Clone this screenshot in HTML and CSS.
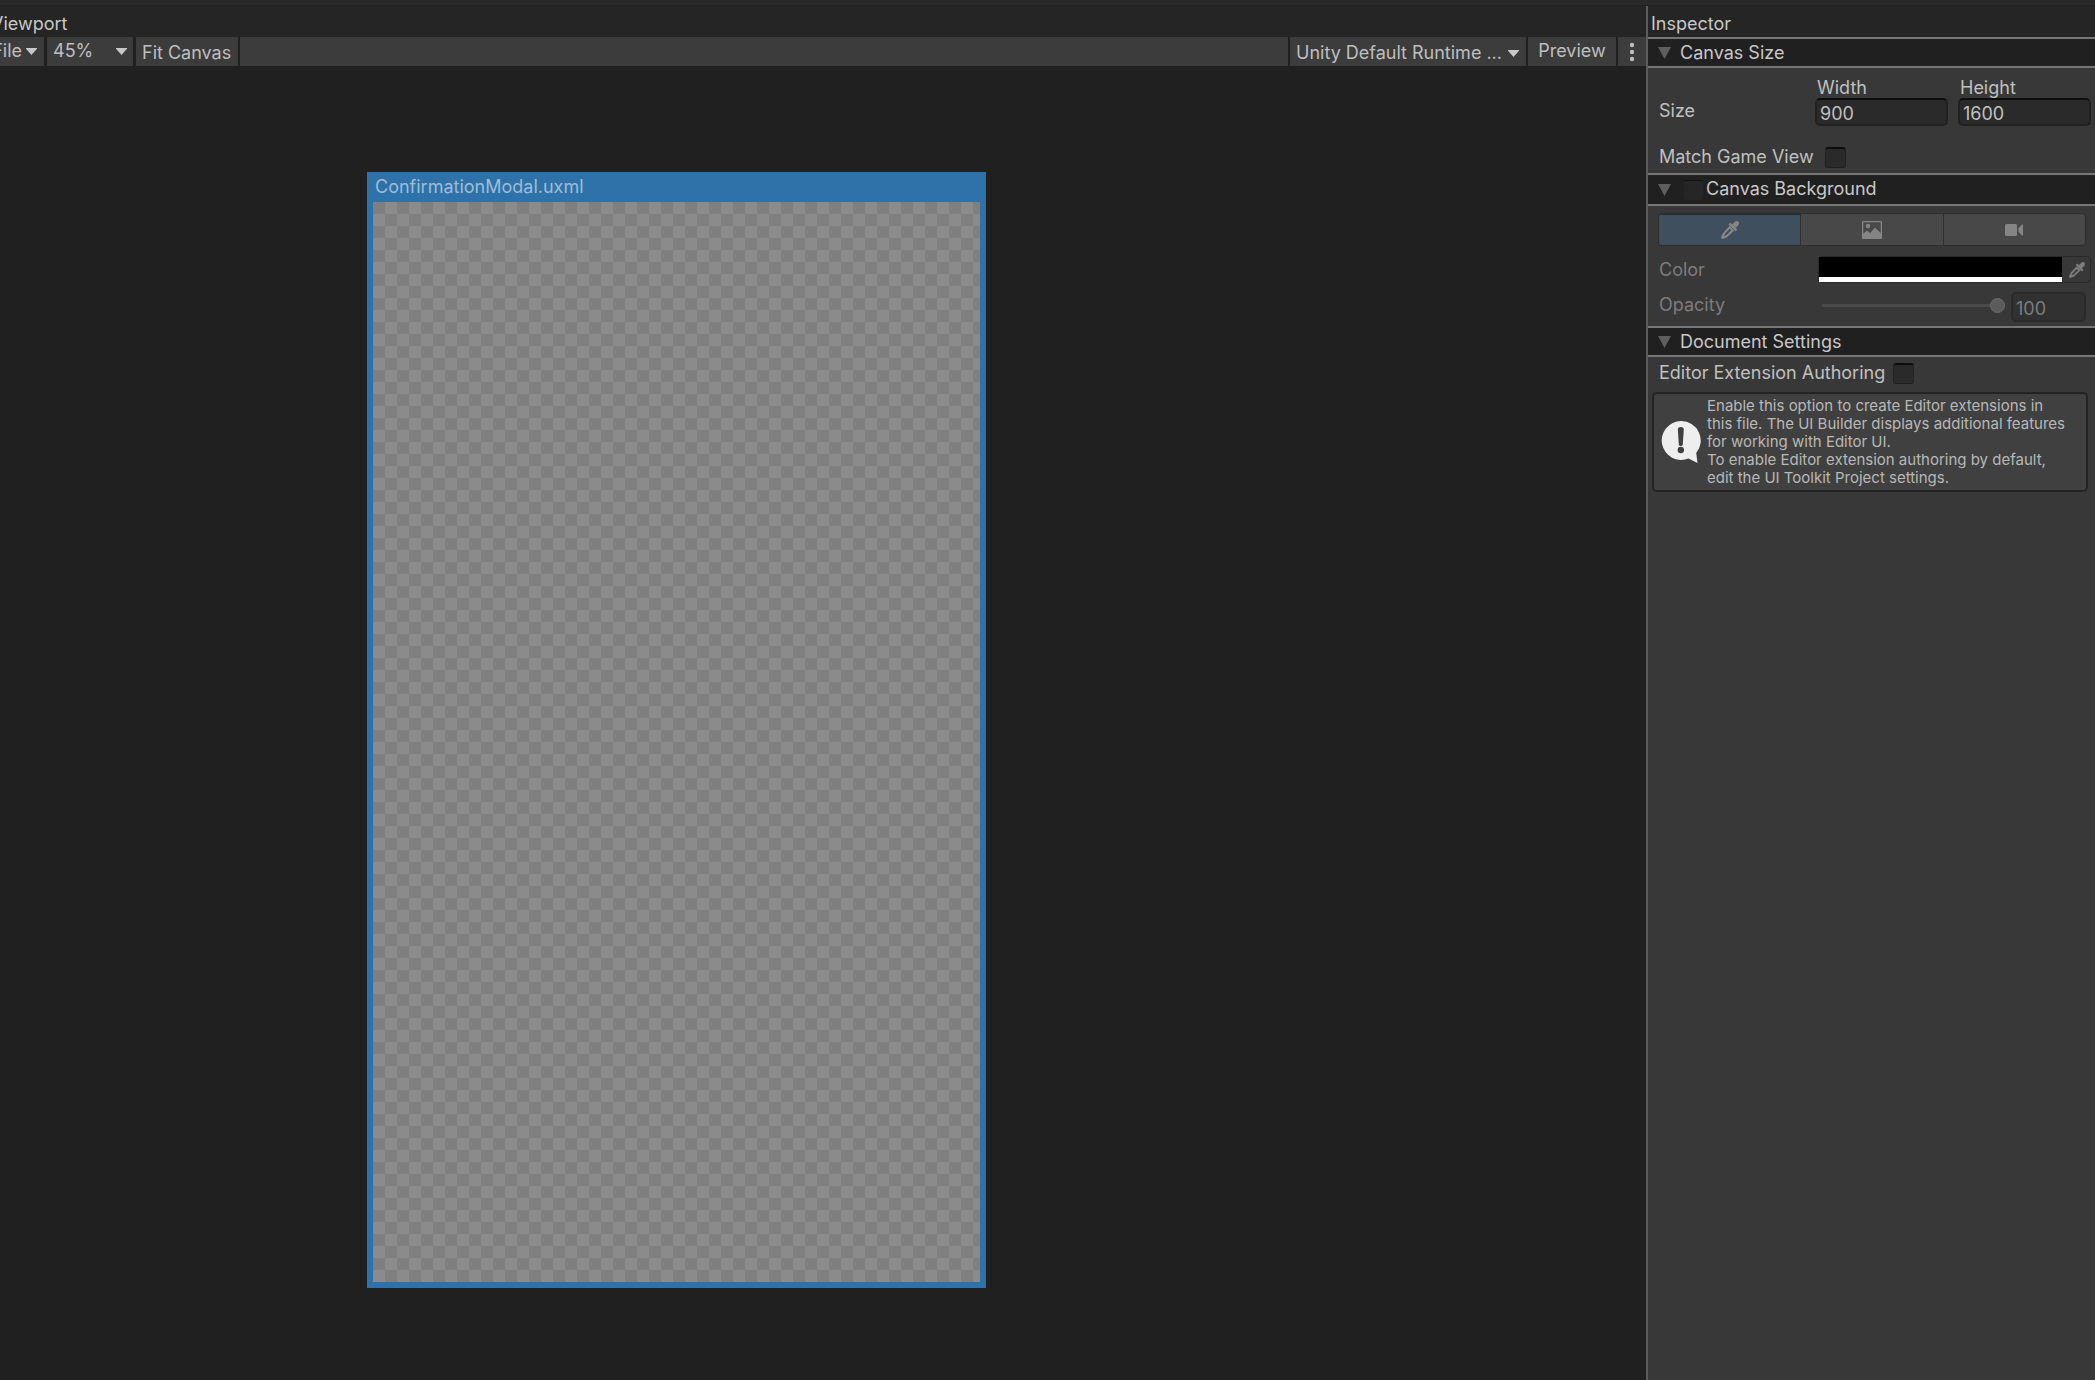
FILE: index.html
```html
<!DOCTYPE html>
<html lang="en">
<head>
  <meta charset="UTF-8">
  <title>UI Builder</title>
  <link rel="stylesheet" href="styles.css">
</head>
<body>

<svg class="symbols" aria-hidden="true">
  <symbol id="dropper" viewBox="0 0 18 18">
    <path fill-rule="evenodd" d="M8.6 4.8 13.2 9.4 5.8 16.4 2.4 17.8H.3V15.6L1.8 12.2zM8.8 7.8 4 12.8 3.2 14.9 5.2 14.2 10.2 9.2z"/>
    <path d="M7.4 3.2 9.4 1.8 11.2 3.4 13.8.8Q15.8-.6 17.4.6 18.6 2.2 17.4 4.2L14.6 6.8 16.2 8.6 14.8 10.6z"/>
  </symbol>
  <symbol id="arrow" viewBox="0 0 11 7">
    <path d="M0 0H11V.8L5.5 7 0 .8z"/>
  </symbol>
  <symbol id="foldout" viewBox="0 0 13 12">
    <path d="M0 0H13L6.5 12z"/>
  </symbol>
</svg>

<div class="topbar"></div>
<div class="editor">

  <main class="viewport">
    <div class="tab">Viewport</div>
    <div class="toolbar">
      <button class="tool file">File <svg class="arrow"><use href="#arrow"/></svg></button>
      <div class="tool dropdown zoom">
        <select aria-label="Zoom"><option>45%</option></select>
        <svg class="arrow"><use href="#arrow"/></svg>
      </div>
      <button class="tool low">Fit Canvas</button>
      <div class="tool spacer"></div>
      <div class="tool dropdown theme low">
        <select aria-label="Theme"><option>Unity Default Runtime ...</option></select>
        <svg class="arrow"><use href="#arrow"/></svg>
      </div>
      <button class="tool preview">Preview</button>
      <button class="tool more" aria-label="More">
        <svg width="6" height="20" viewBox="0 0 6 20"><circle cx="3" cy="3" r="2.2"/><circle cx="3" cy="10" r="2.2"/><circle cx="3" cy="17" r="2.2"/></svg>
      </button>
    </div>
    <div class="stage">
      <div class="canvas">
        <div class="canvas-title">ConfirmationModal.uxml</div>
        <div class="checker"></div>
      </div>
    </div>
  </main>

  <aside class="inspector">
    <div class="tab">Inspector</div>

    <h2 class="heading"><svg class="foldout"><use href="#foldout"/></svg>Canvas Size</h2>
    <section class="size-section">
      <div class="row size-row">
        <span class="name">Size</span>
        <div class="field">
          <label for="width">Width</label>
          <input class="text" id="width" type="text" value="900">
        </div>
        <div class="field">
          <label for="height">Height</label>
          <input class="text" id="height" type="text" value="1600">
        </div>
      </div>
      <div class="row match-row">
        <label for="match">Match Game View</label>
        <input class="check" id="match" type="checkbox">
      </div>
    </section>

    <h2 class="heading tall">
      <svg class="foldout"><use href="#foldout"/></svg>
      <input class="check faint" id="background" type="checkbox">
      <label for="background">Canvas Background</label>
    </h2>
    <section class="background-section">
      <div class="modes">
        <button class="active" aria-label="Color"><svg class="dropper"><use href="#dropper"/></svg></button>
        <button aria-label="Image">
          <svg width="20" height="18" viewBox="0 0 20 18"><path fill-rule="evenodd" d="M1 0H19Q20 0 20 1V17Q20 18 19 18H1Q0 18 0 17V1Q0 0 1 0zM1.3 1.2V12.5L5.2 9.5 8.2 12 13 6.8 18.7 12V1.2z"/><circle cx="6" cy="5" r="2.2"/></svg>
        </button>
        <button aria-label="Camera">
          <svg width="18" height="12" viewBox="0 0 18 12"><rect width="12" height="12" rx="1.5"/><path d="M13.5 4.2 17 .5H18V11.5H17L13.5 7.8z"/></svg>
        </button>
      </div>
      <div class="row color-row">
        <span class="name">Color</span>
        <div class="color-field">
          <button class="swatch" aria-label="Pick color"></button>
          <button class="pick" aria-label="Eyedropper"><svg class="dropper small"><use href="#dropper"/></svg></button>
        </div>
      </div>
      <div class="row opacity-row">
        <label class="name" for="opacity">Opacity</label>
        <input class="slider" id="opacity" type="range" min="0" max="100" value="100">
        <input class="text" type="text" value="100" aria-label="Opacity value">
      </div>
    </section>

    <h2 class="heading"><svg class="foldout"><use href="#foldout"/></svg>Document Settings</h2>
    <section class="document-section">
      <div class="row">
        <label for="authoring">Editor Extension Authoring</label>
        <input class="check" id="authoring" type="checkbox">
      </div>
      <div class="help">
        <svg width="40" height="43" viewBox="0 0 40 43">
          <path class="bubble" d="M20 0A19.5 19.5 0 1 0 27.5 37.6L36.5 42 35.2 32A19.5 19.5 0 0 0 20 0z"/>
          <path class="mark" d="M16.8 8Q17 6 19.8 6T22.8 8L21.8 23.5Q21.5 25 19.8 25T17.8 23.5z"/>
          <circle class="mark" cx="19.8" cy="29" r="3.2"/>
        </svg>
        <p>Enable this option to create Editor extensions in this file. The UI Builder displays additional features for working with Editor UI.<br>To enable Editor extension authoring by default, edit the UI Toolkit Project settings.</p>
      </div>
    </section>
  </aside>

</div>
</body>
</html>
```
FILE: styles.css
```css
* {
  box-sizing: border-box;
}

body {
  margin: 0;
  height: 100vh;
  display: flex;
  flex-direction: column;
  overflow: hidden;
  background: #202020;
  color: #c8c8c8;
  font-family: Inter, sans-serif;
  font-size: 18px;
  line-height: 22px;
}

button, input, select {
  margin: 0;
  padding: 0;
  border: none;
  border-radius: 0;
  background: none;
  color: inherit;
  font: inherit;
}

svg {
  display: block;
  flex: none;
  fill: currentColor;
}

.symbols {
  position: absolute;
  width: 0;
  height: 0;
}

.topbar {
  height: 6px;
  flex: none;
  background: #292929;
  border-bottom: 1px solid #212121;
}

.editor {
  flex: 1;
  display: flex;
  min-height: 0;
}

.tab {
  height: 31px;
  padding-top: 7px;
  background: #252525;
}

/* viewport, its left edge runs under the window border */
.viewport {
  flex: 1;
  min-width: 0;
  margin-left: -16px;
  display: flex;
  flex-direction: column;
}

.viewport .tab {
  padding-left: 7px;
}

.toolbar {
  display: flex;
  gap: 2px;
  height: 29px;
  flex: none;
}

.tool {
  display: flex;
  align-items: center;
  height: 29px;
  padding-bottom: 1px;
  background: #3c3c3c;
  color: #bebebe;
}

.tool.low {
  padding-top: 3px;
  padding-bottom: 0;
}

.arrow {
  width: 11px;
  height: 7px;
  color: #c8c8c8;
}

.file {
  width: 60px;
  margin-right: 1px;
  padding-right: 7px;
  justify-content: flex-end;
  gap: 4px;
}

.dropdown {
  position: relative;
}

.dropdown select {
  appearance: none;
  width: 100%;
  height: 25px;
  padding-left: 6px;
}

.dropdown .arrow {
  position: absolute;
  right: 6px;
  top: 11px;
  pointer-events: none;
}

.dropdown.low .arrow {
  right: 7px;
  top: 13px;
}

.zoom {
  width: 86px;
  margin-right: 1px;
}

button.low {
  padding-left: 6px;
  padding-right: 7px;
}

.spacer {
  flex: 1;
}

.theme {
  width: 236px;
}

.preview {
  width: 88px;
  justify-content: center;
}

.more {
  width: 28px;
  justify-content: center;
  padding-bottom: 0;
}

.stage {
  flex: 1;
  padding: 106px 0 0 383px;
}

.canvas {
  width: 619px;
  padding: 0 6px 6px;
  background: #2e72a9;
}

.canvas-title {
  height: 30px;
  padding: 4px 2px 0;
  color: #9dbdd7;
}

.checker {
  height: 1080px;
  background: repeating-conic-gradient(#8b8b8b 0 25%, #7f7f7f 0 50%) 0 0 / 24px 24px;
}

/* inspector */
.inspector {
  width: 449px;
  flex: none;
  border-left: 2px solid #5c5c5c;
  background: #383838;
}

.inspector .tab {
  padding-left: 3px;
}

.heading {
  display: flex;
  align-items: center;
  height: 31px;
  margin: 0;
  padding-left: 10px;
  border-top: 2px solid #767676;
  border-bottom: 2px solid #767676;
  background: #202020;
  font-size: 18px;
  font-weight: 400;
}

.heading.tall {
  height: 33px;
}

.heading.tall label {
  padding-bottom: 2px;
}

.foldout {
  width: 13px;
  height: 12px;
  margin-right: 9px;
  color: #5e5e5e;
}

.tall .foldout {
  margin-right: 13px;
}

.row {
  display: flex;
  align-items: center;
  padding-left: 11px;
}

.name {
  width: 156px;
}

.text {
  height: 28px;
  padding: 2px 3px 0;
  border: 2px solid #212121;
  border-top-color: #0d0d0d;
  border-radius: 5px;
  background: #2a2a2a;
}

.check {
  appearance: none;
  width: 21px;
  height: 21px;
  border: 1px solid #212121;
  border-top: 2px solid #0d0d0d;
  border-radius: 3px;
  background: #2a2a2a;
}

.check.faint {
  width: 19px;
  height: 20px;
  margin-right: 3px;
  border-color: #262626;
  border-top: 1px solid #141414;
  background: #262626;
}

.size-section {
  height: 105px;
  padding-top: 9px;
}

.size-row {
  align-items: flex-end;
  gap: 10px;
}

.size-row .name {
  width: 146px;
  padding-bottom: 4px;
}

.field {
  display: flex;
  flex-direction: column;
  width: 133px;
}

.field label {
  height: 21px;
  padding-left: 2px;
}

.match-row {
  gap: 11px;
  margin-top: 20px;
}

.size-section, .background-section, .document-section {
  color: #c0c0c0;
}

.background-section {
  height: 120px;
  padding-top: 7px;
  color: #7c7c7c;
}

.modes {
  display: flex;
  gap: 1px;
  height: 33px;
  margin: 0 9px 0 10px;
  border: 1px solid #2d2d2d;
  border-radius: 4px;
  background: #303030;
  overflow: hidden;
}

.modes button {
  flex: 1;
  display: flex;
  align-items: center;
  justify-content: center;
  background: #484848;
  color: #858585;
}

.modes .active {
  background: #404f5e;
  box-shadow: inset 0 1px #252c33;
}

.dropper {
  width: 18px;
  height: 18px;
}

.dropper.small {
  width: 16px;
  height: 16px;
}

.color-row {
  margin-top: 10px;
  padding-left: 11px;
}

.color-row .name {
  width: 159px;
}

.color-field {
  flex: 1;
  display: flex;
  height: 27px;
  margin-right: 4px;
  border: 1px solid #292929;
  border-radius: 4px;
}

.swatch {
  flex: 1;
  border-bottom: 5px solid #fff;
  background: #000;
}

.pick {
  width: 28px;
  display: flex;
  align-items: center;
  justify-content: center;
  padding-left: 2px;
}

.opacity-row {
  margin-top: 9px;
}

.opacity-row .name {
  width: 163px;
  padding-bottom: 4px;
}

.opacity-row .text {
  width: 75px;
  height: 30px;
  border-color: #2a2a2a;
  background: #313131;
}

.slider {
  appearance: none;
  width: 183px;
  height: 16px;
  margin: 0 6px 4px 0;
}

.slider::-webkit-slider-runnable-track {
  height: 3px;
  background: #4b4b4b;
}

.slider::-webkit-slider-thumb {
  appearance: none;
  width: 15px;
  height: 15px;
  margin-top: -6px;
  border: 1px solid #6b6b6b;
  border-radius: 50%;
  background: #5b5b5b;
}

.document-section {
  padding-top: 5px;
}

.document-section .row {
  gap: 8px;
}

.help {
  display: flex;
  align-items: center;
  gap: 6px;
  height: 100px;
  margin: 8px 7px 0 4px;
  padding: 0 20px 0 7px;
  border: 2px solid #232323;
  border-radius: 5px;
  background: #404040;
  color: #b8b8b8;
  font-size: 15px;
  line-height: 18px;
}

.help p {
  margin: 0;
}

.bubble {
  fill: #eee;
}

.mark {
  fill: #404040;
}
```
